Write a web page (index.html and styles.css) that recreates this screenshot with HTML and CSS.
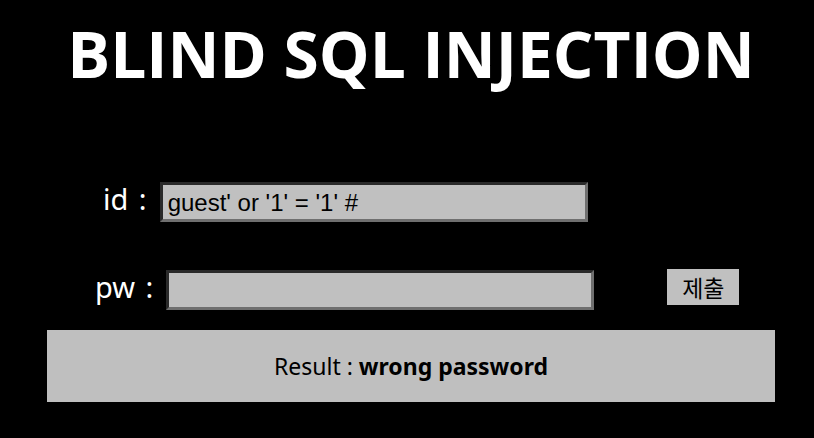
FILE: index.html
```html
<!DOCTYPE html>
<html lang="ko">
<head>
<meta charset="utf-8">
<title>BLIND SQL INJECTION</title>
<link rel="stylesheet" href="styles.css">
</head>
<body>
<h1 class="title">BLIND SQL INJECTION</h1>
<form class="login">
  <div class="row row-id">
    <label class="lbl" for="id">id :</label>
    <input class="field field-id" id="id" type="text" value="guest' or '1' = '1' #">
  </div>
  <div class="row row-pw">
    <label class="lbl" for="pw">pw :</label>
    <input class="field field-pw" id="pw" type="password">
    <button class="submit" type="button">제출</button>
  </div>
</form>
<div class="result">Result : <b>wrong password</b></div>
</body>
</html>
```
FILE: styles.css
```css
html, body {
  margin: 0;
  padding: 0;
  background: #000;
  color: #fff;
  font-family: "Open Sans", "Noto Sans CJK KR", sans-serif;
}
body {
  width: 814px;
  height: 438px;
  overflow: hidden;
}
.title {
  margin: 0;
  padding-top: 14px;
  padding-left: 8px;
  text-align: center;
  font-size: 64px;
  font-weight: 700;
  line-height: 80px;
  letter-spacing: 0;
}
.login {
  margin-top: 88px;
}
.row {
  display: flex;
  align-items: center;
}
.row-id {
  padding-left: 103px;
  height: 40px;
}
.row-pw {
  margin-top: 48px;
  padding-left: 95px;
  height: 40px;
}
.lbl {
  font-family: "Noto Sans", "Noto Sans CJK KR", sans-serif;
  font-size: 29px;
  line-height: 40px;
  padding-bottom: 6px;
  color: #fff;
  word-spacing: 3px;
}
.row-id .lbl { margin-right: 13px; }
.row-pw .lbl { margin-right: 13px; }
.field {
  box-sizing: border-box;
  height: 40px;
  width: 428px;
  background: #c0c0c0;
  border-style: solid;
  border-width: 3px;
  border-color: #2a2a2a #6f6f6f #6f6f6f #2a2a2a;
  font-family: "Liberation Sans", Arial, sans-serif;
  font-size: 24px;
  color: #000;
  padding: 1px 5px 0;
  outline: none;
}
.submit {
  box-sizing: border-box;
  margin-left: 73px;
  margin-top: -6px;
  width: 72px;
  height: 36px;
  background: #c0c0c0;
  border: none;
  font-family: "Noto Sans CJK KR", sans-serif;
  font-size: 23px;
  color: #000;
  padding: 0;
}
.result {
  margin: 20px 39px 0 47px;
  height: 72px;
  background: #bfbfbf;
  color: #000;
  display: flex;
  align-items: center;
  justify-content: center;
  font-family: "Noto Sans", "Noto Sans CJK KR", sans-serif;
  font-size: 23px;
  box-sizing: border-box;
}
.result b {
  font-weight: 700;
  margin-left: 6px;
}
```
